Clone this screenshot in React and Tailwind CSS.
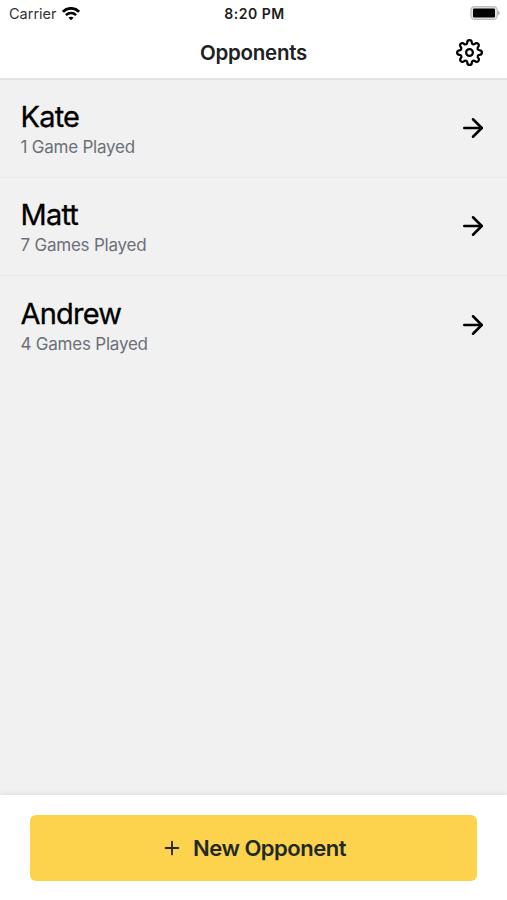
import React from "react";
import { FiArrowRight, FiPlus, FiSettings } from "react-icons/fi";

const opponents = [
    { id: 1, name: "Kate", games: 1 },
    { id: 2, name: "Matt", games: 7 },
    { id: 3, name: "Andrew", games: 4 },
];

const WifiIcon = () => (
    <svg width="18" height="14" viewBox="0 0 18 14" fill="none" stroke="black" strokeWidth="2.8">
        <path d="M0.9 4.8C5.4 0.2 12.6 0.2 17.1 4.8" />
        <path d="M3.9 8.1C6.7 5.3 11.3 5.3 14.1 8.1" strokeWidth="2.5" />
        <path d="M9 13.3L6.4 10.7C7.8 9.3 10.2 9.3 11.6 10.7Z" fill="black" stroke="none" />
    </svg>
);

const BatteryIcon = () => (
    <svg width="30" height="14" viewBox="0 0 30 14">
        <rect x="0.9" y="0.6" width="26.4" height="12.8" rx="3.6" fill="#e2e2e2" stroke="#bdbdbd" strokeWidth="1.2" />
        <rect x="3" y="2.5" width="22" height="9" rx="1.2" fill="black" />
        <path d="M28.2 4.8C30.2 5.6 30.2 8.4 28.2 9.2Z" fill="#a5a5a5" />
    </svg>
);

const StatusBar = () => (
    <div className="grid grid-cols-3 items-center h-[27px] pl-[9px] pr-[7px]">
        <div className="flex items-center gap-[5px]">
            <span className="pt-px text-[14.5px] leading-none text-[#333]">Carrier</span>
            <WifiIcon />
        </div>
        <span className="text-center text-[14px] leading-none font-semibold tracking-[0.5px] text-[#1c1c1c]">8:20 PM</span>
        <div className="flex justify-end pb-px">
            <BatteryIcon />
        </div>
    </div>
);

const OpponentRow = ({ name, games }) => (
    <li className="flex items-center justify-between h-[98.5px] pl-[20.5px] pr-[19.5px] border-b border-[#e8e8e8] last:border-b-0">
        <div className="flex flex-col pt-[2px]">
            <span className="text-[29px] leading-[36px] tracking-[-0.8px] text-black [-webkit-text-stroke:0.3px_black]">{name}</span>
            <span className="text-[17px] leading-6 tracking-[-0.22px] text-[#6b7078]">
                {games} {games === 1 ? "Game" : "Games"} Played
            </span>
        </div>
        <FiArrowRight size={30} className="text-black" />
    </li>
);

const App = () => {
    return (
        <div className="flex flex-col w-full h-[900px] overflow-hidden bg-[#f1f1f1] font-['Inter',sans-serif]">
            {/* Header */}
            <header className="h-20 shrink-0 bg-white border-b-2 border-[#e2e2e2]">
                <StatusBar />
                <div className="grid grid-cols-3 items-center h-[51px] px-[24.5px]">
                    <h1 className="col-start-2 pt-px text-center text-[20.5px] font-semibold tracking-[-0.25px] text-[#202124]">Opponents</h1>
                    <button className="justify-self-end" aria-label="Settings">
                        <FiSettings size={27} className="text-black" />
                    </button>
                </div>
            </header>

            {/* Opponent list */}
            <ul className="flex-1 -mt-px">
                {opponents.map((opponent) => (
                    <OpponentRow key={opponent.id} name={opponent.name} games={opponent.games} />
                ))}
            </ul>

            {/* Footer */}
            <footer className="h-[105px] shrink-0 bg-white px-[30px] pt-5 shadow-[0_-1px_5px_rgba(0,0,0,0.09)]">
                <button className="flex items-center justify-center gap-[10px] w-full h-[65.5px] rounded-md bg-[#fdd24d] text-[#1f2a24]">
                    <FiPlus size={22} />
                    <span className="pt-px text-[22px] font-semibold tracking-[-0.5px]">New Opponent</span>
                </button>
            </footer>
        </div>
    );
};

export default App;
